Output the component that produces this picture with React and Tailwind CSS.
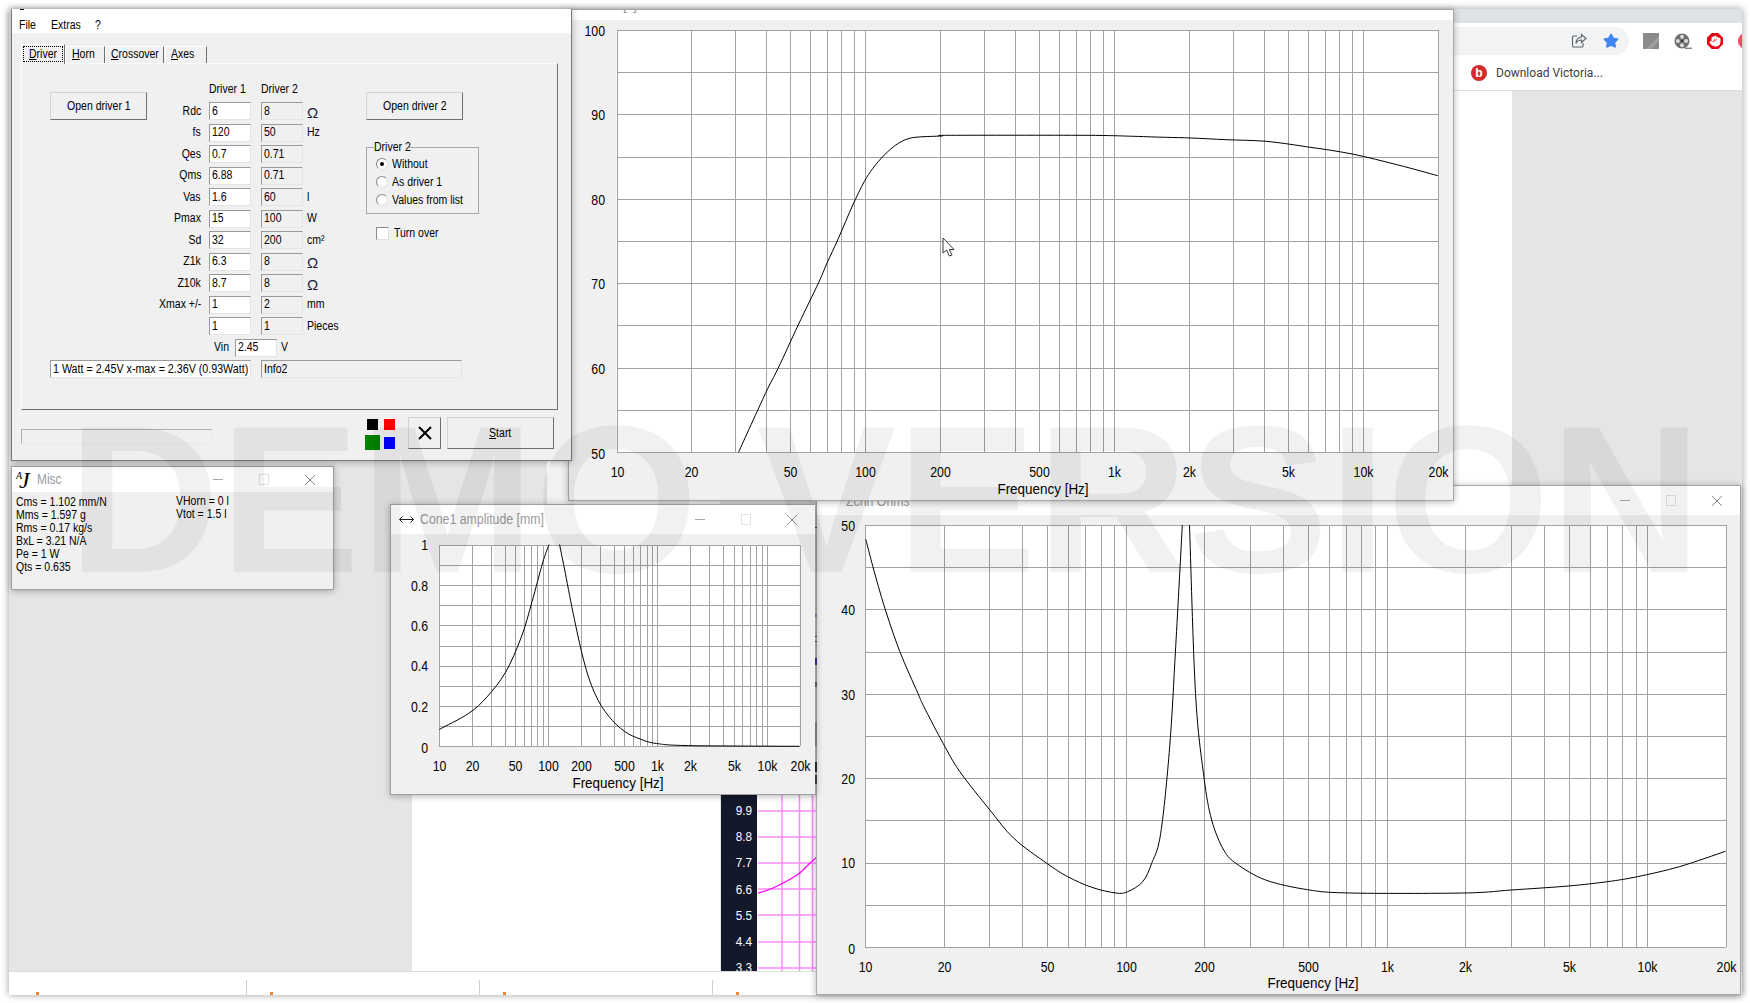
import React from 'react';
import { Star, Hand } from 'lucide-react';

const FONT = "font-['Liberation_Sans',Arial,sans-serif]";

const T = ({ children, className = '' }) => (
  <span className={`inline-block origin-left scale-x-[0.84] whitespace-nowrap text-[12.5px] leading-[15px] text-black ${className}`}>{children}</span>
);
const TC = ({ children }) => (
  <span className="inline-block origin-center scale-x-[0.84] whitespace-nowrap text-[12.5px] leading-[15px] text-black">{children}</span>
);
const TW = ({ children }) => (
  <span className="inline-block origin-left scale-x-[0.855] whitespace-nowrap text-[12.5px] leading-[15px] text-black">{children}</span>
);

const Box = ({ off, className = 'w-[42px]', children }) => (
  <div className={`h-[18px] flex items-center overflow-hidden border border-t-[#9a9a9a] border-l-[#9a9a9a] border-r-[#e4e4e4] border-b-[#e4e4e4] pl-[2px] ${off ? 'bg-[#f0f0f0]' : 'bg-white'} ${className}`}>
    {children}
  </div>
);
const Field = ({ value, off }) => <Box off={off}><T>{value}</T></Box>;

const Btn = ({ children, className = '' }) => (
  <div className={`flex items-center justify-center bg-[#f0f0f0] border border-t-[#d4d4d4] border-l-[#d4d4d4] border-r-[#6e6e6e] border-b-[#6e6e6e] ${className}`}>{children}</div>
);

const Radio = ({ on }) => (
  <div className="w-[12px] h-[12px] rounded-full bg-white border border-t-[#8a8a8a] border-l-[#8a8a8a] border-r-[#e0e0e0] border-b-[#e0e0e0] flex items-center justify-center shrink-0">
    {on && <div className="w-[4px] h-[4px] rounded-full bg-black" />}
  </div>
);

const Tab = ({ children, active, className = '' }) => (
  <div className={`bg-[#f0f0f0] border-t border-l border-t-white border-l-white border-r border-r-[#6e6e6e] flex justify-center ${active ? 'h-[20px] pt-[1px]' : 'h-[17px] mb-[1px]'} ${className}`}>
    {children}
  </div>
);

const ROWS = [
  ['Rdc', '6', '8', 'Ω'], ['fs', '120', '50', 'Hz'], ['Qes', '0.7', '0.71', ''], ['Qms', '6.88', '0.71', ''],
  ['Vas', '1.6', '60', 'l'], ['Pmax', '15', '100', 'W'], ['Sd', '32', '200', 'cm²'], ['Z1k', '6.3', '8', 'Ω'],
  ['Z10k', '8.7', '8', 'Ω'], ['Xmax +/-', '1', '2', 'mm'], ['', '1', '1', 'Pieces'],
];

const WinButtons = () => (
  <div className="flex h-full shrink-0">
    <div className="w-[46px] h-full flex items-center justify-center">
      <div className="w-[10px] h-[1px] bg-[#a8a8a8]" />
    </div>
    <div className="w-[46px] h-full flex items-center justify-center">
      <div className="w-[10px] h-[11px] border border-[#e2e2e2]" />
    </div>
    <div className="w-[46px] h-full flex items-center justify-center">
      <svg width="12" height="12" viewBox="0 0 12 12"><path d="M1 1 L11 11 M11 1 L1 11" stroke="#8a8a8a" strokeWidth="1" fill="none" /></svg>
    </div>
  </div>
);

const GRID_F = [20, 30, 40, 50, 60, 70, 80, 90, 100, 200, 300, 400, 500, 600, 700, 800, 900, 1000, 2000, 3000, 4000, 5000, 6000, 7000, 8000, 9000, 10000];
const XL = [[10, '10'], [20, '20'], [50, '50'], [100, '100'], [200, '200'], [500, '500'], [1000, '1k'], [2000, '2k'], [5000, '5k'], [10000, '10k'], [20000, '20k']];

function smooth(p) {
  let d = `M${p[0][0].toFixed(1)} ${p[0][1].toFixed(1)}`;
  for (let i = 0; i < p.length - 1; i++) {
    const a = p[Math.max(i - 1, 0)], b = p[i], c = p[i + 1], e = p[Math.min(i + 2, p.length - 1)];
    const c1 = [b[0] + (c[0] - a[0]) / 6, b[1] + (c[1] - a[1]) / 6];
    const c2 = [c[0] - (e[0] - b[0]) / 6, c[1] - (e[1] - b[1]) / 6];
    d += ` C${c1[0].toFixed(1)} ${c1[1].toFixed(1)} ${c2[0].toFixed(1)} ${c2[1].toFixed(1)} ${c[0].toFixed(1)} ${c[1].toFixed(1)}`;
  }
  return d;
}

function Chart({ vx, vy, vw, vh, px, py, pw, ph, ylabels, labelEnd, yLab, xLab, freqY, curves, children }) {
  const fx = (f) => Math.round(px + (pw * Math.log(f / 10)) / Math.log(2000)) + 0.5;
  const TS = (x, y, anchor, s, sx = 0.88) => (
    <text key={s + x + y} transform={`translate(${x} ${y}) scale(${sx} 1)`} textAnchor={anchor} fontSize="14" dy=".36em" fill="#000" fontFamily="Liberation Sans, Arial, sans-serif">{s}</text>
  );
  const hs = Array.from({ length: 11 }, (_, i) => Math.round(py + (ph * i) / 10) + 0.5);
  return (
    <svg width={vw} height={vh} viewBox={`${vx} ${vy} ${vw} ${vh}`} className="block">
      <rect x={px} y={py} width={pw} height={ph} fill="#fff" />
      <g stroke="#a2a2a2" strokeWidth="1" shapeRendering="crispEdges">
        {GRID_F.map((f) => <line key={f} x1={fx(f)} x2={fx(f)} y1={py} y2={py + ph} />)}
        {hs.map((y) => <line key={y} x1={px} x2={px + pw} y1={y} y2={y} />)}
        <line x1={fx(10)} x2={fx(10)} y1={py} y2={py + ph} />
        <line x1={fx(20000)} x2={fx(20000)} y1={py} y2={py + ph} />
      </g>
      {curves.map((c, i) => (
        <path key={i} d={smooth(c)} fill="none" stroke="#000" strokeWidth="1" strokeLinejoin="round" />
      ))}
      {ylabels.map(([s, y]) => TS(labelEnd, y, 'end', s))}
      {XL.map(([f, s]) => TS(fx(f), yLab, 'middle', s))}
      {TS(xLab, freqY, 'middle', 'Frequency [Hz]', 0.96)}
      {children}
    </svg>
  );
}

const z4 = (a) => a.map(([x, y]) => [x / 1.742 + 560, y / 3]);
const z5 = (a) => a.map(([x, y]) => [x / 1.668 + 810, y / 3 + 480]);
const z2 = (a) => a.map(([x, y]) => [x / 1.889, y / 2.835 + 450]);

const SPL = z4([[311, 1357], [358, 1180], [380, 1105], [415, 975], [450, 850], [465, 790], [485, 715], [510, 615], [530, 545], [545, 505], [565, 465], [585, 435], [605, 417], [625, 411], [665, 408], [680, 406], [915, 406], [1000, 409], [1055, 412], [1100, 414], [1160, 419], [1230, 424], [1300, 440], [1380, 462], [1460, 495], [1529, 527]]);
const Z1 = z5([[93, 178], [105, 260], [125, 385], [150, 515], [180, 640], [190, 680], [222, 790], [250, 875], [300, 990], [340, 1075], [395, 1150], [430, 1190], [470, 1222], [510, 1239], [530, 1235], [555, 1205], [570, 1150], [585, 1060], [600, 800], [610, 500], [621, 136]]);
const Z2 = z5([[633, 136], [643, 640], [657, 890], [670, 1020], [690, 1110], [712, 1152], [760, 1200], [830, 1229], [900, 1239], [1090, 1239], [1170, 1230], [1265, 1218], [1330, 1205], [1380, 1190], [1450, 1160], [1527, 1114]]);
const C1 = z2([[830, 792], [885, 747], [920, 700], [955, 630], [985, 530], [1005, 430], [1025, 320], [1037, 268]]);
const C2 = z2([[1057, 268], [1068, 350], [1085, 480], [1105, 610], [1125, 695], [1150, 755], [1180, 798], [1210, 820], [1240, 832], [1300, 838], [1510, 840]]);

const MAGENTA_Y = [[9.9, 811], [8.8, 837], [7.7, 863], [6.6, 889], [5.5, 915], [4.4, 942], [3.3, 968]];
const MARKS = [
  ['top-[527px] h-[1px] bg-[#333]'], ['top-[614px] h-[3px] bg-[#6a6a9a]'], ['top-[636px] h-[1px] bg-[#444]'], ['top-[641px] h-[1px] bg-[#444]'],
  ['top-[658px] h-[7px] bg-[#303080]'], ['top-[682px] h-[5px] bg-[#555]'], ['top-[722px] h-[24px] bg-[#777]'], ['top-[762px] h-[10px] bg-[#2a2a2a]'], ['top-[775px] h-[9px] bg-[#3a3a3a]'],
];

export default function App() {
  return (
    <div className={`relative w-[1750px] h-[1003px] overflow-hidden bg-white ${FONT}`}>
      {/* captured screen */}
      <div className="absolute left-[9px] top-[9px] w-[1733px] h-[986px] bg-[#e5e5e5] shadow-[0_0_7px_rgba(0,0,0,0.4)]" />

      {/* browser behind the windows */}
      <div className="absolute left-[1454px] top-[9px] w-[288px] h-[14px] bg-[#dee1e6]" />
      <div className="absolute left-[1454px] top-[23px] w-[288px] h-[68px] bg-white border-b border-[#dadce0] overflow-hidden">
        <div className="flex items-start h-[36px] pt-[4px] w-[340px]">
          <div className="w-[175px] h-[28px] shrink-0 bg-[#f1f3f4] rounded-r-[14px] flex items-center justify-end pr-[10px] gap-[16px]">
            <svg width="16" height="16" viewBox="0 0 16 16" fill="none" stroke="#5f6368" strokeWidth="1.1">
              <path d="M6 3 H2.5 a1 1 0 0 0 -1 1 V13 a1 1 0 0 0 1 1 H11 a1 1 0 0 0 1 -1 V10" />
              <path d="M10.5 1.5 L15 5.5 L10.5 9.5 V7 C8 7 6 8 5 10.5 C5 7 7 4.5 10.5 4 Z" />
            </svg>
            <Star size={16} fill="#4285f4" stroke="#4285f4" />
          </div>
          <div className="flex items-center h-[28px] ml-[14px] gap-[15px] shrink-0">
            <svg className="shrink-0" width="16" height="16" viewBox="0 0 16 16"><rect width="16" height="16" fill="#8a8a8a" /><path d="M3 16 L16 3 V8 L8 16 Z" fill="#9d9d9d" /></svg>
            <svg className="shrink-0" width="18" height="18" viewBox="0 0 18 18">
              <circle cx="8" cy="9" r="7.5" fill="#6f6f6f" />
              <circle cx="8" cy="4.8" r="2" fill="#dcdcdc" /><circle cx="8" cy="13.2" r="2" fill="#dcdcdc" />
              <circle cx="3.9" cy="9" r="2" fill="#dcdcdc" /><circle cx="12.1" cy="9" r="2" fill="#dcdcdc" />
              <circle cx="8" cy="9" r="0.9" fill="#222" />
              <path d="M11 16.3 H18" stroke="#888" strokeWidth="1.5" />
            </svg>
            <div className="w-[16px] h-[16px] shrink-0 [clip-path:polygon(30%_0,70%_0,100%_30%,100%_70%,70%_100%,30%_100%,0_70%,0_30%)] bg-[#e60012] flex items-center justify-center">
              <Hand size={12} fill="#fff" stroke="#fff" />
            </div>
            <div className="w-[16px] h-[16px] rounded-full bg-[#e8505b] shrink-0" />
          </div>
        </div>
        <div className="flex items-center h-[32px] pb-[4px] pl-[17px] gap-[9px]">
          <div className="w-[16px] h-[16px] rounded-full bg-[#d32a2a] flex items-center justify-center text-white text-[12px] leading-none font-bold">b</div>
          <span className="font-['Roboto',sans-serif] text-[12px] text-[#3c4043]">Download Victoria...</span>
        </div>
      </div>
      <div className="absolute left-[1454px] top-[91px] w-[58px] h-[394px] bg-white" />

      {/* white page behind, dark axis strip and magenta graph */}
      <div className="absolute left-[547px] top-[461px] w-[173px] h-[342px] bg-white" />
      <div className="absolute left-[412px] top-[795px] w-[308px] h-[176px] bg-white" />
      <div className="absolute left-[721px] top-[795px] w-[36px] h-[176px] overflow-hidden bg-[#13182a] flex flex-col items-end pr-[5px]">
        {MAGENTA_Y.map(([v], i) => (
          <span key={v} className={`text-[13px] leading-[14px] text-white scale-x-90 origin-right ${i === 0 ? 'mt-[9px]' : 'mt-[12.2px]'}`}>{v}</span>
        ))}
      </div>
      <svg className="absolute left-[757px] top-[795px]" width="60" height="176" viewBox="757 795 60 176">
        <rect x="757" y="795" width="60" height="176" fill="#fff" />
        <g stroke="#ff88ff" strokeWidth="1.5">
          {MAGENTA_Y.map(([v, y]) => <line key={v} x1="758" x2="817" y1={y} y2={y} />)}
          <line x1="782" x2="782" y1="795" y2="971" />
          <line x1="799.5" x2="799.5" y1="795" y2="971" />
          <line x1="812.5" x2="812.5" y1="795" y2="971" />
        </g>
        <path d={smooth([[758, 893], [773, 888], [797, 875], [808, 865], [817, 857]])} fill="none" stroke="#ff00ff" strokeWidth="1.2" />
      </svg>

      {/* task strip at the bottom */}
      <div className="absolute left-[9px] top-[971px] w-[1733px] h-[24px] bg-white border-t border-[#dcdcdc] overflow-hidden flex">
        {[0, 1, 2, 3].map((i) => (
          <div key={i} className={`relative w-[233px] h-full ${i === 0 ? 'ml-[4px]' : 'border-l border-[#cfcfcf] mt-[8px]'}`}>
            <div className={`absolute left-[23px] w-[3px] h-[3px] bg-[#ee8a2c] ${i === 0 ? 'top-[20px]' : 'top-[12px]'}`} />
          </div>
        ))}
      </div>

      {/* Z window */}
      <div className="absolute left-[816px] top-[485px] w-[925px] h-[510px] bg-[#f0f0f0] border border-[#a8a8a8] shadow-[0_1px_7px_rgba(0,0,0,0.3)] flex flex-col">
        <div className="h-[29px] bg-white flex items-center justify-between shrink-0">
          <span className="ml-[29px] mt-[2px] inline-block origin-left scale-x-[0.88] text-[14px] text-[#9a9a9a]">Zchn Ohms</span>
          <WinButtons />
        </div>
        <Chart vx={817} vy={515} vw={923} vh={479} px={865} py={525} pw={861} ph={422}
          ylabels={[['50', 526], ['40', 610], ['30', 695], ['20', 779], ['10', 863], ['0', 949]]} labelEnd={855}
          yLab={967} xLab={1313} freqY={983} curves={[Z1, Z2]} />
      </div>

      {/* response window */}
      <div className="absolute left-[568px] top-[9px] w-[886px] h-[492px] bg-[#f0f0f0] border border-[#a8a8a8] shadow-[0_1px_7px_rgba(0,0,0,0.3)] flex flex-col">
        <div className="h-[10px] bg-white shrink-0 overflow-hidden">
          <span className="block ml-[54px] -mt-[13px] text-[14px] leading-[16px] tracking-[6px] text-[#9a9a9a]">[]</span>
        </div>
        <Chart vx={569} vy={20} vw={884} vh={480} px={616.5} py={30} pw={821.5} ph={422}
          ylabels={[['100', 31], ['90', 115], ['80', 200], ['70', 284], ['60', 369], ['50', 454]]} labelEnd={605}
          yLab={472} xLab={1043} freqY={489} curves={[SPL]}>
          <path d="M943 238 V253 L946.6 250 L949.3 256 L952 255 L949.3 249.5 L954 249.5 Z" fill="#fff" stroke="#222" strokeWidth="0.9" />
        </Chart>
      </div>

      {/* Cone window */}
      <div className="absolute left-[390px] top-[504px] w-[426px] h-[291px] bg-[#f0f0f0] border border-[#a0a0a0] shadow-[0_1px_7px_rgba(0,0,0,0.3)] flex flex-col">
        <div className="h-[29px] bg-white flex items-center justify-between shrink-0">
          <div className="flex items-center pl-[8px] gap-[6px]">
            <svg width="15" height="9" viewBox="0 0 15 9" fill="none" stroke="#222" strokeWidth="1"><path d="M0.5 4.5 H14.5 M3.5 1.5 L0.5 4.5 L3.5 7.5 M11.5 1.5 L14.5 4.5 L11.5 7.5" /></svg>
            <span className="inline-block origin-left scale-x-[0.88] whitespace-nowrap text-[14px] text-[#9a9a9a]">Cone1 amplitude [mm]</span>
          </div>
          <WinButtons />
        </div>
        <Chart vx={391} vy={534} vw={424} vh={260} px={438.7} py={545} pw={360.8} ph={201}
          ylabels={[['1', 545], ['0.8', 586], ['0.6', 626], ['0.4', 666], ['0.2', 707], ['0', 748]]} labelEnd={428}
          yLab={766} xLab={618} freqY={783} curves={[C1, C2]} />
      </div>
      {MARKS.map(([c]) => <div key={c} className={`absolute left-[815px] w-[2px] ${c}`} />)}

      {/* Misc window */}
      <div className="absolute left-[11px] top-[466px] w-[323px] h-[124px] bg-[#f0f0f0] border border-[#a0a0a0] shadow-[0_1px_7px_rgba(0,0,0,0.3)] flex flex-col">
        <div className="h-[25px] bg-white flex items-center justify-between shrink-0">
          <div className="flex items-center pl-[4px] gap-[4px]">
            <span className="relative w-[17px] h-[24px] font-['Liberation_Serif',serif] italic text-black">
              <span className="absolute left-0 top-[3px] text-[10px] leading-none">A</span>
              <span className="absolute left-[3px] top-0 text-[24px] leading-[24px]">J</span>
            </span>
            <span className="inline-block origin-left scale-x-[0.85] text-[14px] text-[#9a9aa2]">Misc</span>
          </div>
          <WinButtons />
        </div>
        <div className="flex pl-[4px] pt-[3px]">
          <div className="w-[160px] flex flex-col">
            {['Cms = 1.102 mm/N', 'Mms = 1.597 g', 'Rms = 0.17 kg/s', 'BxL = 3.21 N/A', 'Pe = 1 W', 'Qts = 0.635'].map((s) => (
              <T key={s} className="h-[13px] leading-[13px]">{s}</T>
            ))}
          </div>
          <div className="flex flex-col -mt-[1px]">
            {['VHorn = 0 l', 'Vtot = 1.5 l'].map((s) => (
              <T key={s} className="h-[13px] leading-[13px]">{s}</T>
            ))}
          </div>
        </div>
      </div>

      {/* main window */}
      <div className="absolute left-[11px] top-[9px] w-[561px] h-[452px] bg-[#f0f0f0] border-l border-r border-b border-[#7a7a7a] shadow-[0_1px_7px_rgba(0,0,0,0.3)] flex flex-col">
        <div className="h-[24px] bg-white flex items-center pl-[7px] pt-[8px] gap-[9px] shrink-0 relative">
          <div className="absolute left-[8px] top-0 w-[4px] h-[1px] bg-black" />
          <T className="w-[23px]">File</T>
          <T className="w-[35px]">Extras</T>
          <T>?</T>
        </div>
        <div className="flex-1 flex flex-col pl-[9px] pt-[11px]">
          <div className="flex items-end h-[20px] -mb-[1px] relative z-10">
            <Tab active className="w-[44px]">
              <div className="border border-dotted border-black h-[16px] w-[40px] pl-[5px] flex items-center">
                <T><u>D</u>river</T>
              </div>
            </Tab>
            <Tab className="w-[40px] pl-[6px] justify-start"><T><u>H</u>orn</T></Tab>
            <Tab className="w-[59px] pl-[5px] justify-start"><T><u>C</u>rossover</T></Tab>
            <Tab className="w-[42px] ml-[1px] pl-[5px] justify-start"><T><u>A</u>xes</T></Tab>
          </div>
          <div className="w-[537px] h-[347px] border border-t-[#fbfbfb] border-l-[#fbfbfb] border-r-[#6e6e6e] border-b-[#6e6e6e] pl-[28px] pt-[17px] flex flex-col">
            <div className="flex">
              <div className="w-[104px] pt-[11px] shrink-0">
                <Btn className="w-[97px] h-[28px]"><TC>Open driver 1</TC></Btn>
              </div>
              <div className="w-[212px] shrink-0 flex flex-col">
                <div className="h-[21px] pl-[55px] pt-[1px] flex items-start">
                  <T className="w-[52px]">Driver 1</T>
                  <T>Driver 2</T>
                </div>
                {ROWS.map(([l, a, b, u]) => (
                  <div key={l + a} className="h-[21.5px] flex items-start">
                    <div className="w-[47px] h-[18px] flex items-center justify-end">
                      <span className="inline-block origin-right scale-x-[0.84] whitespace-nowrap text-[12.5px] text-black">{l}</span>
                    </div>
                    <div className="ml-[8px]"><Field value={a} /></div>
                    <div className="ml-[10px]"><Field value={b} off /></div>
                    <div className="ml-[4px] h-[18px] flex items-center">
                      {u === 'Ω'
                        ? <span className="text-[15px] text-[#1a1a40] leading-none mt-[2px]">Ω</span>
                        : <T>{u}</T>}
                    </div>
                  </div>
                ))}
                <div className="h-[21.5px] flex items-start pl-[60px]">
                  <div className="w-[21px] h-[18px] flex items-center"><T>Vin</T></div>
                  <Field value="2.45" />
                  <div className="ml-[4px] h-[18px] flex items-center"><T>V</T></div>
                </div>
              </div>
              <div className="flex flex-col pt-[11px]">
                <Btn className="w-[97px] h-[28px]"><TC>Open driver 2</TC></Btn>
                <div className="relative mt-[27px] w-[113px] h-[67px] border border-[#a8a8a8] pl-[9px] pt-[10px] flex flex-col gap-[6px]">
                  <div className="absolute left-[7px] -top-[8px] bg-[#f0f0f0] w-[35px] h-[15px] flex items-center"><T>Driver 2</T></div>
                  {[['Without', true], ['As driver 1', false], ['Values from list', false]].map(([s, on]) => (
                    <div key={s} className="flex items-center gap-[4px] h-[12px]">
                      <Radio on={on} />
                      <T>{s}</T>
                    </div>
                  ))}
                </div>
                <div className="flex items-center gap-[5px] mt-[12px] ml-[10px]">
                  <div className="w-[13px] h-[13px] bg-white border border-t-[#8a8a8a] border-l-[#8a8a8a] border-r-[#e0e0e0] border-b-[#e0e0e0]" />
                  <T>Turn over</T>
                </div>
              </div>
            </div>
            <div className="flex gap-[10px]">
              <Box className="w-[201px]"><TW>1 Watt = 2.45V x-max = 2.36V (0.93Watt)</TW></Box>
              <Box off className="w-[201px]"><T>Info2</T></Box>
            </div>
          </div>
          <div className="flex items-start mt-[7px]">
            <div className="w-[191px] h-[15px] mt-[12px] border border-t-[#b0b0b0] border-l-[#b0b0b0] border-r-[#e8e8e8] border-b-[#e8e8e8]" />
            <div className="ml-[153px] mt-[2px] w-[30px] grid grid-cols-[15px_11px] gap-x-[4px] gap-y-[5px]">
              <div className="w-[11px] h-[11px] bg-black justify-self-center" />
              <div className="w-[11px] h-[11px] bg-[#ff0000]" />
              <div className="w-[15px] h-[15px] bg-[#008000]" />
              <div className="w-[11px] h-[12px] bg-[#0000ff] mt-[2px]" />
            </div>
            <Btn className="ml-[13px] w-[33px] h-[32px]">
              <svg width="14" height="14" viewBox="0 0 14 14"><path d="M1 1 L13 13 M13 1 L1 13" stroke="#000" strokeWidth="2" fill="none" /></svg>
            </Btn>
            <Btn className="ml-[6px] w-[107px] h-[32px]"><TC><u>S</u>tart</TC></Btn>
          </div>
        </div>
      </div>

      {/* watermark */}
      <div className="absolute left-[68px] top-[395px] z-50 pointer-events-none whitespace-nowrap text-[210px] leading-none font-bold text-black/[0.055]">DEMO VERSION</div>
    </div>
  );
}
